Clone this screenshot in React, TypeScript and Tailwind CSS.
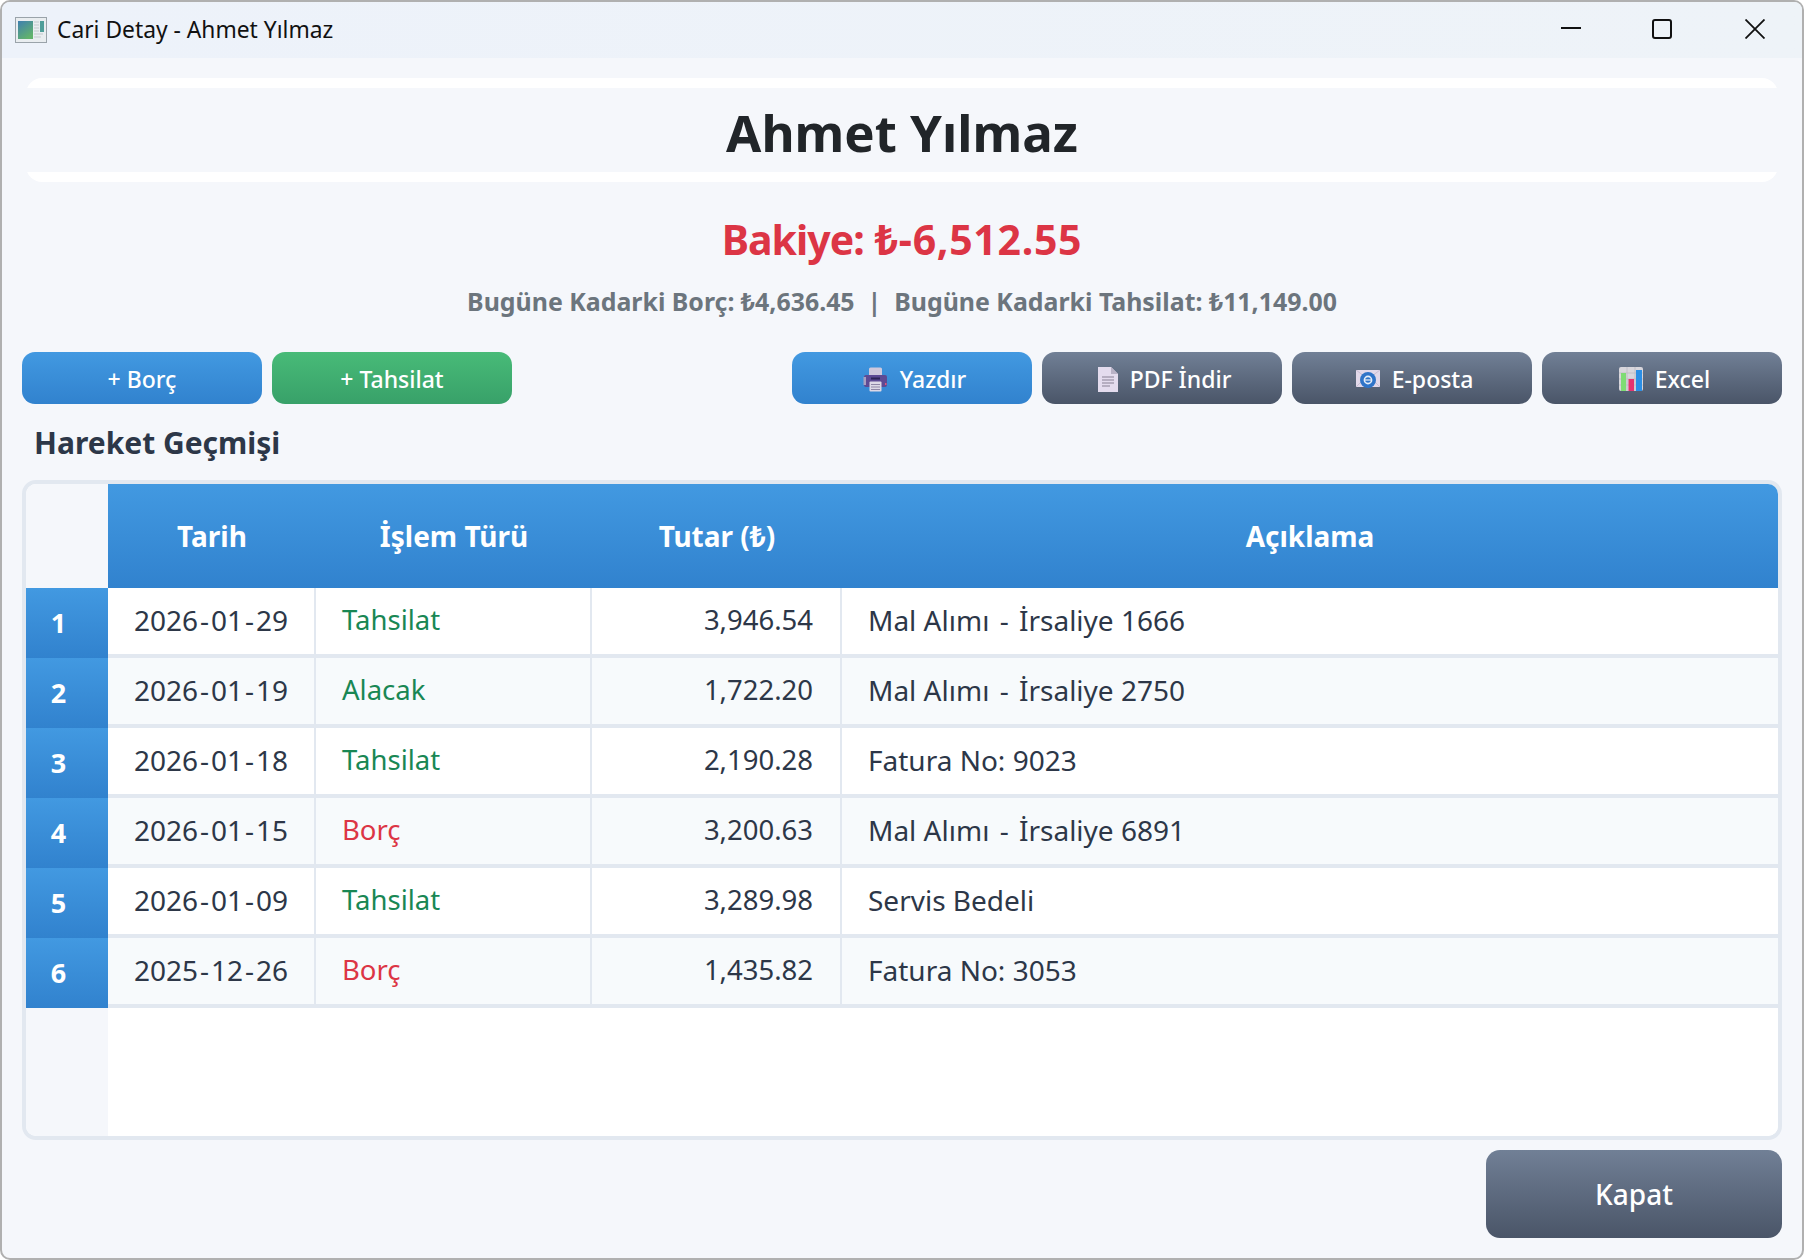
// App.tsx - Cari detay penceresi
import React from "react";

interface Movement {
  date: string;
  type: string;
  amount: string;
  note: string;
}

const movements: Movement[] = [
  { date: "2026-01-29", type: "Tahsilat", amount: "3,946.54", note: "Mal Alımı - İrsaliye 1666" },
  { date: "2026-01-19", type: "Alacak", amount: "1,722.20", note: "Mal Alımı - İrsaliye 2750" },
  { date: "2026-01-18", type: "Tahsilat", amount: "2,190.28", note: "Fatura No: 9023" },
  { date: "2026-01-15", type: "Borç", amount: "3,200.63", note: "Mal Alımı - İrsaliye 6891" },
  { date: "2026-01-09", type: "Tahsilat", amount: "3,289.98", note: "Servis Bedeli" },
  { date: "2025-12-26", type: "Borç", amount: "1,435.82", note: "Fatura No: 3053" },
];

const AppIcon = () => (
  <svg width="32" height="26" viewBox="0 0 32 26">
    <defs>
      <linearGradient id="appg" x1="0" y1="0" x2="0.6" y2="1">
        <stop offset="0" stopColor="#3f7fb0" />
        <stop offset="1" stopColor="#62b36c" />
      </linearGradient>
    </defs>
    <rect x="0.5" y="0.5" width="31" height="25" fill="#e9edf0" stroke="#9aa3aa" />
    <rect x="3" y="4" width="15" height="18" fill="url(#appg)" />
    <rect x="25" y="4" width="4" height="11" fill="#4f9e9a" />
    <path d="M19 5h5M19 8h5M19 11h5M19 14h5M19 17h9M19 20h7" stroke="#c3c9cd" strokeWidth="1" />
  </svg>
);

const PrinterIcon = () => (
  <svg width="25" height="25" viewBox="0 0 25 25">
    <rect x="6" y="0.5" width="13" height="9" rx="1.5" fill="#cfc8dc" />
    <path d="M3 8h19a2 2 0 0 1 2 2v8a2 2 0 0 1-2 2H3a2 2 0 0 1-2-2v-8a2 2 0 0 1 2-2z" fill="#5d4a94" />
    <rect x="0.5" y="10" width="2.5" height="8" fill="#a99fc0" />
    <rect x="8" y="10.5" width="9" height="2" fill="#2f2558" />
    <rect x="6.5" y="14.5" width="12" height="10" rx="1" fill="#ddd8e6" />
    <path d="M8 17.5h9M8 20h9M8 22.5h9" stroke="#8f86a6" strokeWidth="1" />
    <rect x="22" y="16" width="1.5" height="2" fill="#e0557a" />
  </svg>
);

const DocIcon = () => (
  <svg width="20" height="25" viewBox="0 0 20 25">
    <path d="M0 0h13l7 7v18H0z" fill="#e4dcee" />
    <path d="M13 0l7 7h-7z" fill="#b9b2c6" />
    <path d="M4 10h12M4 13h12M4 16h12M4 19h8" stroke="#a79fb3" strokeWidth="1.4" />
  </svg>
);

const MailIcon = () => (
  <svg width="24" height="18" viewBox="0 0 24 18">
    <rect width="24" height="17" fill="#e2d9ea" />
    <path d="M0 0l12 9L24 0M0 17l8-8M24 17l-8-8" stroke="#c9bed4" strokeWidth="1" fill="none" />
    <circle cx="12" cy="10" r="8" fill="#2f74c8" />
    <circle cx="12" cy="10" r="3.6" fill="none" stroke="#e6eef8" strokeWidth="1.6" />
    <path d="M9 10h6" stroke="#e6eef8" strokeWidth="1.2" />
  </svg>
);

const ChartIcon = () => (
  <svg width="24" height="24" viewBox="0 0 24 24">
    <rect width="24" height="24" rx="2" fill="#d8d6dc" />
    <path d="M8 0v24M16 0v24M0 6h24M0 12h24M0 18h24" stroke="#bdbbc3" strokeWidth="0.8" />
    <rect x="2" y="6" width="5" height="18" fill="#7fdc74" />
    <rect x="9.5" y="12" width="5.5" height="12" fill="#e7336f" />
    <rect x="17" y="3" width="6" height="21" fill="#2b8fe6" />
  </svg>
);

const blueBtn = "bg-gradient-to-b from-[#4299e1] to-[#3182ce]";
const grayBtn = "bg-gradient-to-b from-[#718096] to-[#4a5568]";
const greenBtn = "bg-gradient-to-b from-[#48bb78] to-[#38a169]";

const ActionButton = ({
  label,
  color,
  icon,
}: {
  label: string;
  color: string;
  icon?: React.ReactNode;
}) => (
  <button
    className={`flex h-[52px] w-[240px] items-center justify-center gap-[12px] rounded-[13px] pt-[2px] text-[23px] font-medium text-white ${color} ${icon ? "pl-[5px]" : ""}`}
  >
    {icon}
    {label}
  </button>
);

const typeColor = (type: string) => (type === "Borç" ? "text-[#dc3545]" : "text-[#198754]");

// tireler referansta daha geniş duruyor
const WideHyphen = ({ text, className }: { text: string; className: string }) => (
  <span>
    {text.split("-").map((part, i) => (
      <React.Fragment key={i}>
        {i > 0 && <span className={className}>-</span>}
        {part}
      </React.Fragment>
    ))}
  </span>
);

const HeaderCell = ({ label }: { label: string }) => (
  <div className="flex items-center justify-center text-[28px] font-bold text-white">{label}</div>
);

export default function App() {
  return (
    <div className="h-[1260px] w-[1804px] bg-white font-['Noto_Sans',sans-serif]">
      <div className="flex h-[1260px] w-[1804px] flex-col overflow-hidden rounded-[10px] border-2 border-[#b0b0b0] bg-[#f5f7fb]">
        {/* başlık çubuğu */}
        <div className="flex h-[56px] shrink-0 items-center bg-gradient-to-r from-[#edf2fa] to-[#eef3f8]">
          <div className="ml-[13px] flex items-center gap-[10px]">
            <AppIcon />
            <span className="text-[22.8px] text-[#111]">Cari Detay - Ahmet Yılmaz</span>
          </div>
          <div className="ml-auto flex items-center pb-[2px] text-[#111]">
            <svg width="20" height="20" viewBox="0 0 20 20" className="mr-[71px]">
              <path d="M0 9h20" stroke="currentColor" strokeWidth="2" />
            </svg>
            <svg width="20" height="20" viewBox="0 0 20 20" className="mr-[73px]">
              <rect x="1" y="1" width="18" height="18" rx="2" fill="none" stroke="currentColor" strokeWidth="2" />
            </svg>
            <svg width="20" height="20" viewBox="0 0 20 20" className="mr-[37px]">
              <path d="M0.5 0.5l19 19M19.5 0.5l-19 19" stroke="currentColor" strokeWidth="1.8" />
            </svg>
          </div>
        </div>

        {/* içerik */}
        <div className="flex flex-1 flex-col px-[20px] pt-[20px]">
          <div className="mx-[4px] rounded-[16px] bg-white py-[10px]">
            <div className="flex h-[84px] items-center justify-center bg-[#f5f7fb] pt-[4px] text-[51px] font-bold text-[#212529]">
              Ahmet Yılmaz
            </div>
          </div>

          <div className="mt-[28px] flex h-[60px] items-center justify-center text-[41px] font-bold text-[#dc3545]">
            <span className="tracking-[-1px]">Bakiye:</span>
            <span className="ml-[11px] tracking-[0.7px]">₺-6,512.55</span>
          </div>
          <div className="mt-[12px] flex h-[40px] items-center justify-center text-[24.9px] font-bold text-[#6c757d]">
            Bugüne Kadarki Borç: ₺4,636.45 &nbsp;|&nbsp; Bugüne Kadarki Tahsilat: ₺11,149.00
          </div>

          <div className="mt-[30px] flex gap-[10px]">
            <ActionButton label="+ Borç" color={blueBtn} />
            <ActionButton label="+ Tahsilat" color={greenBtn} />
            <div className="ml-auto flex gap-[10px]">
              <ActionButton label="Yazdır" color={blueBtn} icon={<PrinterIcon />} />
              <ActionButton label="PDF İndir" color={grayBtn} icon={<DocIcon />} />
              <ActionButton label="E-posta" color={grayBtn} icon={<MailIcon />} />
              <ActionButton label="Excel" color={grayBtn} icon={<ChartIcon />} />
            </div>
          </div>

          <h2 className="ml-[12px] mt-[18px] flex h-[40px] items-center text-[30px] font-bold text-[#2d3748]">
            Hareket Geçmişi
          </h2>

          {/* tablo */}
          <div className="mt-[18px] grid h-[660px] grid-cols-[82px_208px_276px_250px_1fr] grid-rows-[104px_repeat(6,70px)_1fr] overflow-hidden rounded-[14px] border-4 border-[#e2e8f0] bg-white">
            <div className="bg-[#f5f7fb]" />
            <div className={`col-span-4 grid grid-cols-[208px_276px_250px_1fr] ${blueBtn}`}>
              <HeaderCell label="Tarih" />
              <HeaderCell label="İşlem Türü" />
              <HeaderCell label="Tutar (₺)" />
              <HeaderCell label="Açıklama" />
            </div>

            {movements.map((m, index) => (
              <React.Fragment key={index}>
                <div className={`flex items-center justify-center pr-[17px] text-[27px] font-bold text-white ${blueBtn}`}>
                  {index + 1}
                </div>
                <div className={`col-span-4 grid grid-cols-[208px_276px_250px_1fr] border-b-4 border-[#e2e8f0] text-[28px] text-[#2d3748] ${index % 2 ? "bg-[#f7fafc]" : "bg-white"}`}>
                  <div className="flex items-center justify-center border-r-2 border-[#e2e8f0] pb-[2px]">
                    <WideHyphen text={m.date} className="px-[2px]" />
                  </div>
                  <div className={`flex items-center border-r-2 border-[#e2e8f0] pb-[2px] pl-[26px] text-[27.5px] ${typeColor(m.type)}`}>{m.type}</div>
                  <div className="flex items-center justify-end border-r-2 border-[#e2e8f0] pb-[2px] pr-[27px] text-[27.5px]">{m.amount}</div>
                  <div className="flex items-center pb-[2px] pl-[26px]">
                    <WideHyphen text={m.note} className="px-[3px]" />
                  </div>
                </div>
              </React.Fragment>
            ))}

            <div className="bg-[#f5f7fb]" />
            <div className="col-span-4 bg-white" />
          </div>

          <div className="mt-[10px] flex justify-end">
            <button className={`h-[88px] w-[296px] rounded-[14px] text-[28px] font-medium text-white ${grayBtn}`}>
              Kapat
            </button>
          </div>
        </div>
      </div>
    </div>
  );
}
